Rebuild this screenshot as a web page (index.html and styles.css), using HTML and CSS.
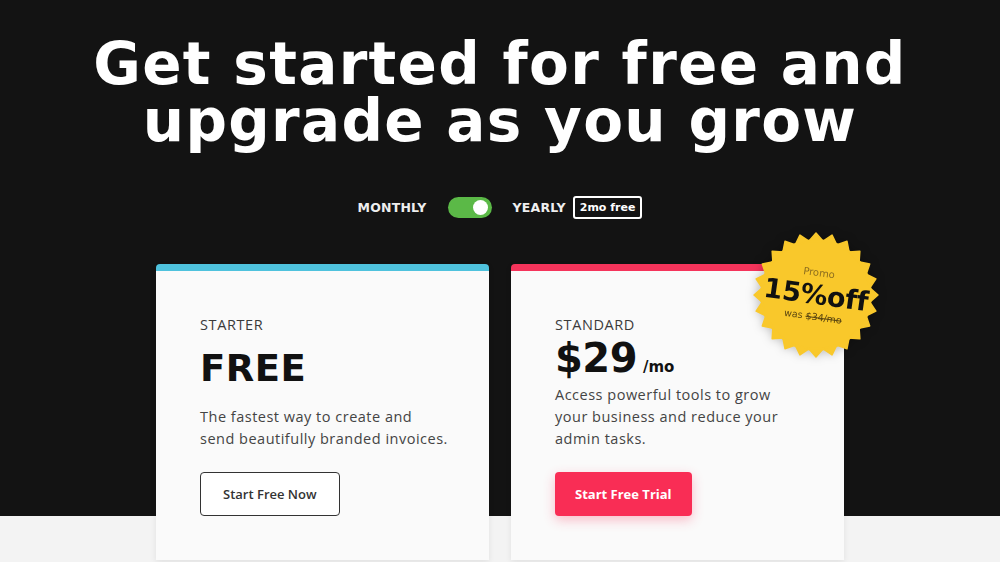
FILE: index.html
```html
<!DOCTYPE html>
<html lang="en">
<head>
    <meta charset="UTF-8">
    <meta name="viewport" content="width=device-width, initial-scale=1.0">
    <title>Pricing</title>
    <link rel="stylesheet" href="styles.css">
</head>
<body>

    <div class="page">
        <h1><span class="line">Get started for free and</span><span class="line">upgrade as you grow</span></h1>

        <div class="billing">
            <span class="billing-label">MONTHLY</span>
            <span class="switch"><span class="knob"></span></span>
            <span class="billing-label">YEARLY</span>
            <span class="free-tag">2mo free</span>
        </div>

        <div class="plans">
            <div class="plan plan-starter">
                <div class="plan-name">STARTER</div>
                <div class="plan-price price-free">FREE</div>
                <p class="plan-desc">The fastest way to create and<br>send beautifully branded invoices.</p>
                <button class="btn btn-outline">Start Free Now</button>
            </div>

            <div class="plan plan-standard">
                <div class="plan-name">STANDARD</div>
                <div class="plan-price">$29<span class="per">/mo</span></div>
                <p class="plan-desc">Access powerful tools to grow<br>your business and reduce your<br>admin tasks.</p>
                <button class="btn btn-primary">Start Free Trial</button>

                <!-- promo sticker -->
                <div class="promo">
                    <svg class="burst" viewBox="-64 -64 128 128" width="128" height="128">
                        <defs>
                            <polygon id="spike" points="0,-62 -7.4,-53.5 7.4,-53.5"/>
                        </defs>
                        <g fill="#f9c82b" stroke="#f9c82b" stroke-width="1.5" stroke-linejoin="round">
                            <circle r="55"/>
                            <use href="#spike"/>
                            <use href="#spike" transform="rotate(15)"/>
                            <use href="#spike" transform="rotate(30)"/>
                            <use href="#spike" transform="rotate(45)"/>
                            <use href="#spike" transform="rotate(60)"/>
                            <use href="#spike" transform="rotate(75)"/>
                            <use href="#spike" transform="rotate(90)"/>
                            <use href="#spike" transform="rotate(105)"/>
                            <use href="#spike" transform="rotate(120)"/>
                            <use href="#spike" transform="rotate(135)"/>
                            <use href="#spike" transform="rotate(150)"/>
                            <use href="#spike" transform="rotate(165)"/>
                            <use href="#spike" transform="rotate(180)"/>
                            <use href="#spike" transform="rotate(195)"/>
                            <use href="#spike" transform="rotate(210)"/>
                            <use href="#spike" transform="rotate(225)"/>
                            <use href="#spike" transform="rotate(240)"/>
                            <use href="#spike" transform="rotate(255)"/>
                            <use href="#spike" transform="rotate(270)"/>
                            <use href="#spike" transform="rotate(285)"/>
                            <use href="#spike" transform="rotate(300)"/>
                            <use href="#spike" transform="rotate(315)"/>
                            <use href="#spike" transform="rotate(330)"/>
                            <use href="#spike" transform="rotate(345)"/>
                        </g>
                    </svg>
                    <div class="promo-text">
                        <div class="promo-small">Promo</div>
                        <div class="promo-big">15%off</div>
                        <div class="promo-was">was <s>$34/mo</s></div>
                    </div>
                </div>
            </div>
        </div>
    </div>

</body>
</html>
```

FILE: styles.css
```css
/* General Styles */
body {
    margin: 0;
    padding: 0;
    background: #f3f3f3;
    font-family: 'Open Sans', sans-serif;
    color: #333;
}

/* dark top band, light strip below the cards */
.page {
    min-height: 562px;
    padding-top: 36px;
    box-sizing: border-box;
    text-align: center;
    background: linear-gradient(to bottom, #131313 0, #131313 516px, #f3f3f3 516px);
}

h1 {
    margin: 0;
    font-family: 'DejaVu Sans', sans-serif;
    font-weight: 700;
    font-size: 58px;
    letter-spacing: 1.3px;
    color: #fff;
}

h1 .line {
    display: block;
    height: 57px;
    line-height: 57px;
}

/* Billing toggle */
.billing {
    display: flex;
    justify-content: center;
    align-items: center;
    margin-top: 46px;
    height: 23px;
}

.billing-label {
    font-family: 'DejaVu Sans', sans-serif;
    font-weight: 700;
    font-size: 12.5px;
    letter-spacing: 0.2px;
    color: #eee;
}

.switch {
    position: relative;
    width: 44px;
    height: 21px;
    margin: 0 21px;
    border-radius: 11px;
    background: #5bb947;
}

.knob {
    position: absolute;
    right: 4px;
    top: 3px;
    width: 15px;
    height: 15px;
    border-radius: 50%;
    background: #fff;
}

.free-tag {
    margin-left: 7px;
    padding: 0 5px;
    height: 19px;
    line-height: 19px;
    border: 2px solid #fff;
    border-radius: 3px;
    font-family: 'DejaVu Sans', sans-serif;
    font-weight: 700;
    font-size: 11px;
    color: #fff;
}

/* Plans */
.plans {
    display: flex;
    justify-content: center;
    gap: 22px;
    margin-top: 45px;
    text-align: left;
}

.plan {
    position: relative;
    width: 333px;
    box-sizing: border-box;
    padding: 44px;
    background: #fafafa;
    border-top: 7px solid #4fc2dd;
    border-radius: 4px 4px 0 0;
    box-shadow: 0 2px 6px rgba(0, 0, 0, 0.08);
}

.plan-standard {
    border-top-color: #f5345b;
}

.plan-name {
    font-size: 14.5px;
    line-height: 20px;
    letter-spacing: 0.6px;
    color: #3a3a3a;
}

.plan-price {
    font-family: 'DejaVu Sans', sans-serif;
    font-weight: 700;
    font-size: 40px;
    line-height: 44px;
    height: 44px;
    letter-spacing: -0.5px;
    color: #111;
    margin: 1px 0 4px;
}

.price-free {
    font-size: 37px;
    margin: 12px 0 15px;
    letter-spacing: 0.5px;
}

.per {
    font-size: 15px;
    line-height: 1;
    font-weight: 600;
    letter-spacing: 0;
    margin-left: 6px;
}

.plan-desc {
    margin: 0;
    font-size: 14.5px;
    line-height: 22px;
    letter-spacing: 0.5px;
    white-space: nowrap;
    color: #444;
}

/* Buttons */
.btn {
    margin-top: 22px;
    height: 44px;
    font-family: 'Open Sans', sans-serif;
    font-size: 13px;
    font-weight: 600;
    border-radius: 4px;
    cursor: pointer;
}

.btn-outline {
    background: #fff;
    color: #333;
    border: 1px solid #333;
    padding: 0 22px;
}

.btn-primary {
    background: #f92d55;
    color: #fff;
    border: none;
    font-weight: 700;
    padding: 0 20px;
    box-shadow: 0 4px 12px rgba(249, 45, 85, 0.3);
}

/* Promo sticker */
.promo {
    position: absolute;
    left: 241px;
    top: -40px;
    width: 128px;
    height: 128px;
    filter: drop-shadow(0 0 5px rgba(0, 0, 0, 0.25));
}

.burst {
    display: block;
}

.promo-text {
    position: absolute;
    left: 0;
    top: 0;
    width: 128px;
    height: 128px;
    display: flex;
    flex-direction: column;
    justify-content: center;
    align-items: center;
    transform: rotate(8deg);
    text-align: center;
    color: #111;
}

.promo-small {
    font-family: 'DejaVu Sans', sans-serif;
    font-size: 10px;
    color: #8c6d1f;
    line-height: 14px;
}

.promo-big {
    font-family: 'DejaVu Sans', sans-serif;
    font-weight: 700;
    font-size: 27px;
    line-height: 30px;
    letter-spacing: -0.3px;
}

.promo-was {
    font-family: 'DejaVu Sans', sans-serif;
    font-size: 9.5px;
    color: #5a4510;
    line-height: 14px;
}
```
